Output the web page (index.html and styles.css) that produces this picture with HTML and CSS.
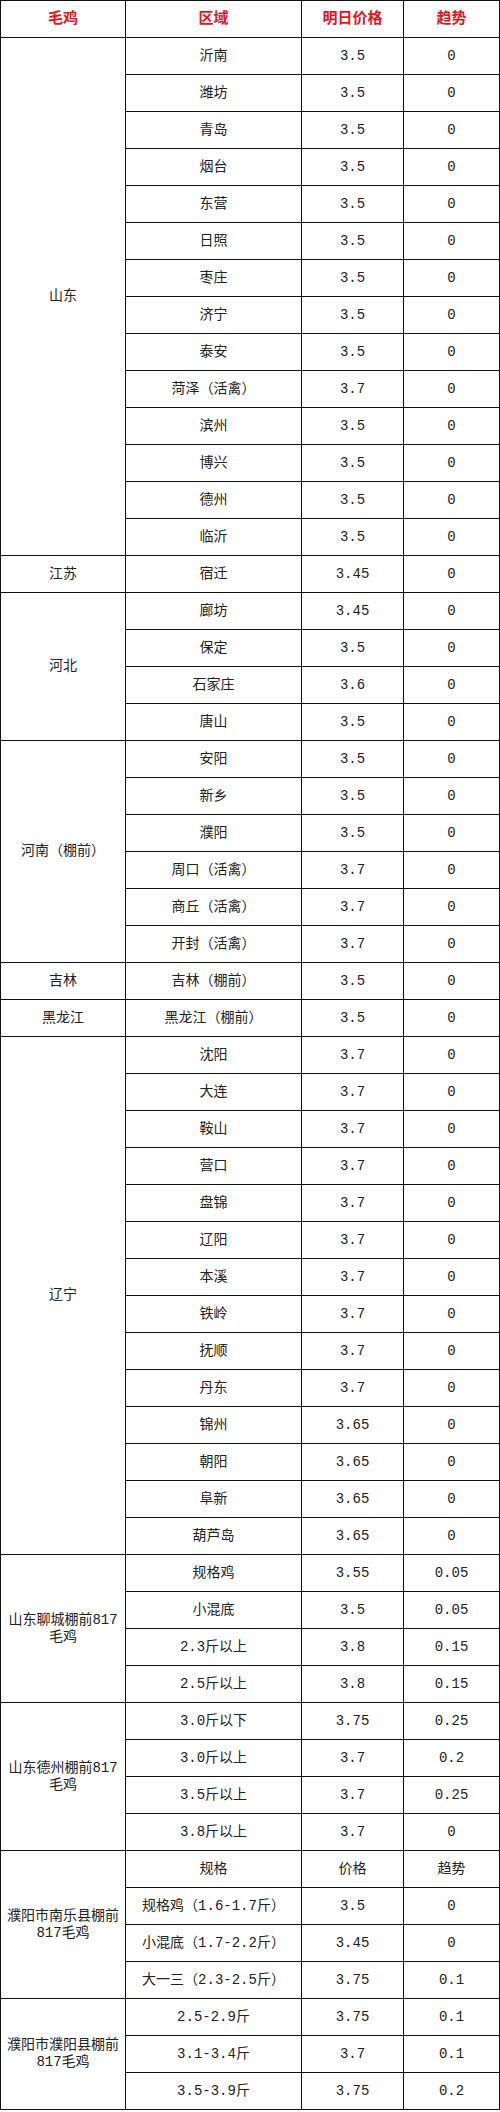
FILE: index.html
```html
<!DOCTYPE html>
<html lang="zh-CN">
<head>
<meta charset="utf-8">
<title>毛鸡价格</title>
<link rel="stylesheet" href="styles.css">
</head>
<body>
<table class="price-table">
<colgroup>
<col class="c-group">
<col class="c-area">
<col class="c-price">
<col class="c-trend">
</colgroup>
<thead>
<tr class="head"><th>毛鸡</th><th>区域</th><th>明日价格</th><th>趋势</th></tr>
</thead>
<tbody>
<tr><td rowspan="14">山东</td><td>沂南</td><td>3.5</td><td>0</td></tr>
<tr><td>潍坊</td><td>3.5</td><td>0</td></tr>
<tr><td>青岛</td><td>3.5</td><td>0</td></tr>
<tr><td>烟台</td><td>3.5</td><td>0</td></tr>
<tr><td>东营</td><td>3.5</td><td>0</td></tr>
<tr><td>日照</td><td>3.5</td><td>0</td></tr>
<tr><td>枣庄</td><td>3.5</td><td>0</td></tr>
<tr><td>济宁</td><td>3.5</td><td>0</td></tr>
<tr><td>泰安</td><td>3.5</td><td>0</td></tr>
<tr><td>菏泽（活禽）</td><td>3.7</td><td>0</td></tr>
<tr><td>滨州</td><td>3.5</td><td>0</td></tr>
<tr><td>博兴</td><td>3.5</td><td>0</td></tr>
<tr><td>德州</td><td>3.5</td><td>0</td></tr>
<tr><td>临沂</td><td>3.5</td><td>0</td></tr>
<tr><td>江苏</td><td>宿迁</td><td>3.45</td><td>0</td></tr>
<tr><td rowspan="4">河北</td><td>廊坊</td><td>3.45</td><td>0</td></tr>
<tr><td>保定</td><td>3.5</td><td>0</td></tr>
<tr><td>石家庄</td><td>3.6</td><td>0</td></tr>
<tr><td>唐山</td><td>3.5</td><td>0</td></tr>
<tr><td rowspan="6">河南（棚前）</td><td>安阳</td><td>3.5</td><td>0</td></tr>
<tr><td>新乡</td><td>3.5</td><td>0</td></tr>
<tr><td>濮阳</td><td>3.5</td><td>0</td></tr>
<tr><td>周口（活禽）</td><td>3.7</td><td>0</td></tr>
<tr><td>商丘（活禽）</td><td>3.7</td><td>0</td></tr>
<tr><td>开封（活禽）</td><td>3.7</td><td>0</td></tr>
<tr><td>吉林</td><td>吉林（棚前）</td><td>3.5</td><td>0</td></tr>
<tr><td>黑龙江</td><td>黑龙江（棚前）</td><td>3.5</td><td>0</td></tr>
<tr><td rowspan="14">辽宁</td><td>沈阳</td><td>3.7</td><td>0</td></tr>
<tr><td>大连</td><td>3.7</td><td>0</td></tr>
<tr><td>鞍山</td><td>3.7</td><td>0</td></tr>
<tr><td>营口</td><td>3.7</td><td>0</td></tr>
<tr><td>盘锦</td><td>3.7</td><td>0</td></tr>
<tr><td>辽阳</td><td>3.7</td><td>0</td></tr>
<tr><td>本溪</td><td>3.7</td><td>0</td></tr>
<tr><td>铁岭</td><td>3.7</td><td>0</td></tr>
<tr><td>抚顺</td><td>3.7</td><td>0</td></tr>
<tr><td>丹东</td><td>3.7</td><td>0</td></tr>
<tr><td>锦州</td><td>3.65</td><td>0</td></tr>
<tr><td>朝阳</td><td>3.65</td><td>0</td></tr>
<tr><td>阜新</td><td>3.65</td><td>0</td></tr>
<tr><td>葫芦岛</td><td>3.65</td><td>0</td></tr>
<tr><td rowspan="4" class="wrap">山东聊城棚前817毛鸡</td><td>规格鸡</td><td>3.55</td><td>0.05</td></tr>
<tr><td>小混底</td><td>3.5</td><td>0.05</td></tr>
<tr><td>2.3斤以上</td><td>3.8</td><td>0.15</td></tr>
<tr><td>2.5斤以上</td><td>3.8</td><td>0.15</td></tr>
<tr><td rowspan="4" class="wrap">山东德州棚前817毛鸡</td><td>3.0斤以下</td><td>3.75</td><td>0.25</td></tr>
<tr><td>3.0斤以上</td><td>3.7</td><td>0.2</td></tr>
<tr><td>3.5斤以上</td><td>3.7</td><td>0.25</td></tr>
<tr><td>3.8斤以上</td><td>3.7</td><td>0</td></tr>
<tr><td rowspan="4" class="wrap">濮阳市南乐县棚前817毛鸡</td><td>规格</td><td>价格</td><td>趋势</td></tr>
<tr><td>规格鸡（1.6-1.7斤）</td><td>3.5</td><td>0</td></tr>
<tr><td>小混底（1.7-2.2斤）</td><td>3.45</td><td>0</td></tr>
<tr><td>大一三（2.3-2.5斤）</td><td>3.75</td><td>0.1</td></tr>
<tr><td rowspan="3" class="wrap">濮阳市濮阳县棚前817毛鸡</td><td>2.5-2.9斤</td><td>3.75</td><td>0.1</td></tr>
<tr><td>3.1-3.4斤</td><td>3.7</td><td>0.1</td></tr>
<tr><td>3.5-3.9斤</td><td>3.75</td><td>0.2</td></tr>
</tbody>
</table>
</body>
</html>
```

FILE: styles.css
```css
html, body {
  margin: 0;
  padding: 0;
  background: #ffffff;
}

.price-table {
  width: 499px;
  table-layout: fixed;
  border-collapse: collapse;
  font-family: "Liberation Mono", "Noto Sans CJK SC", monospace;
  font-size: 14px;
  color: #222222;
}

.c-group { width: 125px; }
.c-area { width: 176px; }
.c-price { width: 102px; }
.c-trend { width: 96px; }

.price-table th,
.price-table td {
  border: 1px solid #111111;
  height: 36px;
  padding: 0 4px;
  text-align: center;
  vertical-align: middle;
  line-height: 17px;
  white-space: nowrap;
}

.price-table th {
  color: #e8141c;
  font-weight: bold;
  font-size: 15px;
}

.price-table td.wrap {
  white-space: normal;
  padding: 0 5px;
}
```
